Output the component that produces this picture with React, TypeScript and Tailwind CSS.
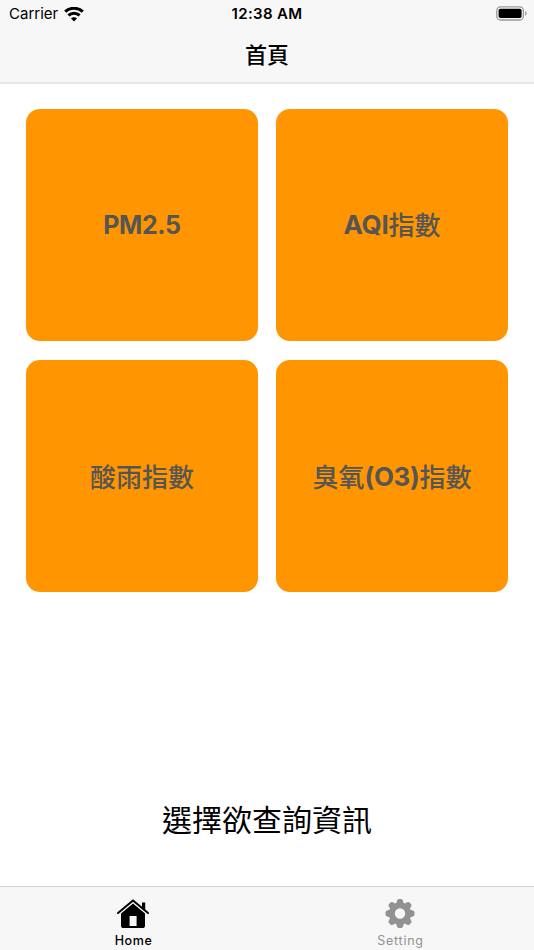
import React from 'react';

const cards = [
	{key: 'pm25', title: 'PM2.5'},
	{key: 'aqi', title: 'AQI指數'},
	{key: 'acid', title: '酸雨指數'},
	{key: 'ozone', title: '臭氧(O3)指數'},
];

// Latin runs are set heavier and slightly tighter than the Chinese ones
const CardTitle = ({title}: {title: string}) => (
	<span className="flex items-center text-[26px] font-medium">
		{title.split(/([\x20-\x7e]+)/).filter(Boolean).map((part) => (
			/^[\x20-\x7e]/.test(part)
				? <span key={part} className={part === 'PM2.5' ? 'pt-[2px] text-[25px] font-bold tracking-[-0.4px]' : 'font-bold tracking-[-0.3px]'}>{part}</span>
				: <span key={part} className="pt-[2px]">{part}</span>
		))}
	</span>
);

const WifiIcon = () => (
	<svg width="20" height="15" viewBox="0 0 20 15" fill="none" stroke="black" strokeWidth="3">
		<path d="M1.2 4.7C6 .1 14 .1 18.8 4.7"/>
		<path d="M4.4 8.4C7.5 5.5 12.5 5.5 15.6 8.4"/>
		<path d="M10 14.5 7 11.5C8.5 9.8 11.5 9.8 13 11.5Z" fill="black" stroke="none"/>
	</svg>
);

const BatteryIcon = () => (
	<svg width="32" height="16" viewBox="0 0 32 16" fill="none">
		<rect x=".8" y=".8" width="26.6" height="13.2" rx="3.8" stroke="#999" strokeWidth="1.3"/>
		<rect x="2.6" y="2.7" width="23" height="9.4" rx="1.8" fill="black"/>
		<path d="M29.2 5v4.8c1.9-.8 1.9-4 0-4.8Z" fill="#999"/>
	</svg>
);

const HomeIcon = () => (
	<svg width="32" height="30" viewBox="0 0 32 30" fill="none" className="relative -left-[0.5px]">
		<path d="M1 14 16 1.4 31 14" stroke="black" strokeWidth="2" strokeLinecap="round" strokeLinejoin="round"/>
		<path d="M25 3.6h3.2v7.4L25 8.5Z" fill="black"/>
		<path d="M16 4.4 28 14.4V26.4q0 2.6-2.6 2.6H6.6Q4 29 4 26.4V14.4ZM12.6 17v10h7V17Z" fill="black" fillRule="evenodd"/>
	</svg>
);

const GearIcon = () => (
	<svg width="30" height="30" viewBox="0 0 30 30" fill="#929292" className="relative -left-[0.5px]">
		<path
			fillRule="evenodd"
			d="M15 3.5a11 11 0 1 0 0 22 11 11 0 0 0 0-22Zm0 5.8a5.2 5.2 0 1 1 0 10.4 5.2 5.2 0 0 1 0-10.4Z"
		/>
		{[0, 45, 90, 135, 180, 225, 270, 315].map((angle) => (
			<path key={angle} transform={`rotate(${angle} 15 14.5)`} d="M11 4.9 12.1 1.5Q12.5 0 13.9 0h2.2q1.4 0 1.8 1.5L19 4.9Z"/>
		))}
	</svg>
);

const StatusBar = () => (
	<div className="grid h-7 grid-cols-3 items-center pl-[9px] pr-[6px]">
		<div className="flex items-center gap-[6px] text-[15px]">
			<span>Carrier</span>
			<WifiIcon/>
		</div>
		<span className="-ml-[3px] text-center text-[15px] font-semibold tracking-[0.35px]">12:38 AM</span>
		<div className="flex justify-end">
			<BatteryIcon/>
		</div>
	</div>
);

const TabItem = ({label, active = false, children}: {label: string; active?: boolean; children: React.ReactNode}) => (
	<button className={`flex flex-1 flex-col items-center pt-3 text-[12.5px] leading-4 ${active ? 'font-medium tracking-[0.6px] text-black' : 'font-normal tracking-[0.75px] text-[#929292]'}`}>
		{children}
		<span className="mt-[4px]">{label}</span>
	</button>
);

export default function App() {
	return (
		<div className="flex h-[950px] w-[534px] flex-col overflow-hidden bg-white font-['Inter','Noto_Sans_CJK_TC',sans-serif] text-black">
			<header className="h-[84px] shrink-0 border-b-2 border-[#e6e6e6] bg-[#f7f7f7]">
				<StatusBar/>
				<h1 className="mt-[11px] text-center text-[22px] leading-8 font-medium">首頁</h1>
			</header>

			<main className="flex flex-1 flex-col">
				<div className="grid grid-cols-2 gap-x-[18px] gap-y-[19.5px] px-[26px] pt-[24.7px]">
					{cards.map((card) => (
						<button
							key={card.key}
							className="flex h-[232px] items-center justify-center rounded-[14px] bg-[#ff9500] text-[#555]"
						>
							<CardTitle title={card.title}/>
						</button>
					))}
				</div>
				<p className="mt-auto mb-[44px] text-center text-[30px] leading-[44px]">選擇欲查詢資訊</p>
			</main>

			<nav className="flex h-[64px] shrink-0 border-t border-[#d4d4d4] bg-[#f7f7f7]">
				<TabItem label="Home" active>
					<HomeIcon/>
				</TabItem>
				<TabItem label="Setting">
					<GearIcon/>
				</TabItem>
			</nav>
		</div>
	);
}
